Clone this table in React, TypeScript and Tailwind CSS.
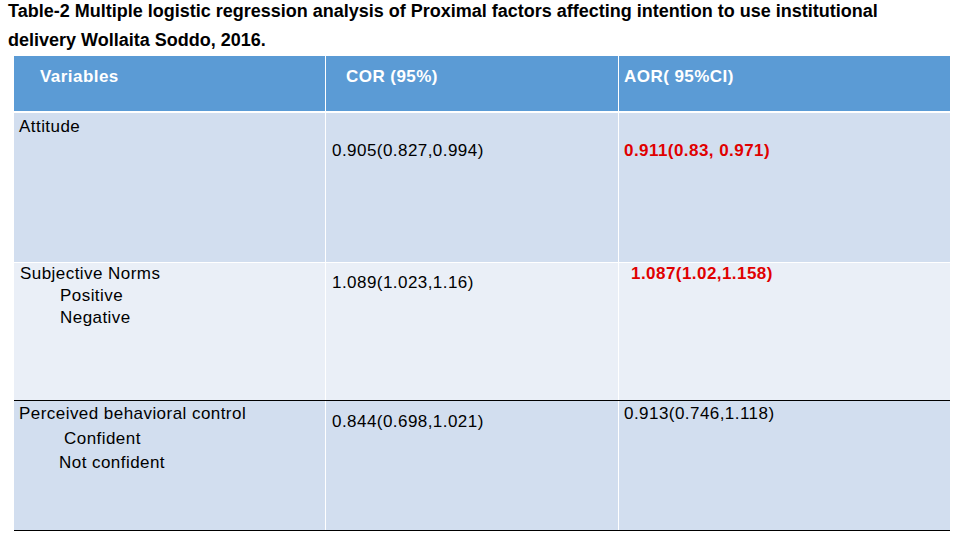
const font = { fontFamily: '"Liberation Sans", Arial, sans-serif' }

export default function App() {
  return (
    <div className="w-[960px] h-[540px] bg-white text-black overflow-hidden" style={font}>
      <div className="pl-[8px] font-bold text-[18px]">
        <div className="leading-[22px]">
          Table-2 Multiple logistic regression analysis of Proximal factors affecting intention to use institutional
        </div>
        <div className="leading-[22px] mt-[7px]">delivery Wollaita Soddo, 2016.</div>
      </div>

      <div className="ml-[14px] w-[936px] mt-[5px] text-[17px] tracking-[0.45px]">
        {/* header */}
        <div className="grid grid-cols-[311px_292px_331px] gap-x-px h-[55px] text-white font-bold leading-[20px]">
          <div className="bg-[#5b9bd5] pl-[26px] pt-[11px]">Variables</div>
          <div className="bg-[#5b9bd5] pl-[20px] pt-[11px]">COR (95%)</div>
          <div className="bg-[#5b9bd5] pl-[5px] pt-[11px]">AOR( 95%CI)</div>
        </div>

        {/* attitude */}
        <div className="grid grid-cols-[311px_292px_331px] gap-x-px h-[149px] mt-[2px] leading-[18px]">
          <div className="bg-[#d2deef] pl-[5px] pt-[5px]">Attitude</div>
          <div className="bg-[#d2deef] pl-[6px] pt-[29px]">0.905(0.827,0.994)</div>
          <div className="bg-[#d2deef] pl-[5px] pt-[29px] font-bold text-[#e00000]">0.911(0.83, 0.971)</div>
        </div>

        {/* subjective norms */}
        <div className="grid grid-cols-[311px_292px_331px] gap-x-px h-[137px] mt-px leading-[22px]">
          <div className="bg-[#eaeff7] pl-[6px]">
            <div>Subjective Norms</div>
            <div className="pl-[40px]">Positive</div>
            <div className="pl-[40px]">Negative</div>
          </div>
          <div className="bg-[#eaeff7] pl-[6px] pt-[9px]">1.089(1.023,1.16)</div>
          <div className="bg-[#eaeff7] pl-[12px] font-bold text-[#e00000]">1.087(1.02,1.158)</div>
        </div>
        <div className="h-px bg-black" />

        {/* perceived behavioral control */}
        <div className="grid grid-cols-[311px_292px_331px] gap-x-px h-[129px] leading-[24px]">
          <div className="bg-[#d2deef] pl-[5px] pt-[1px]">
            <div>Perceived behavioral control</div>
            <div className="pl-[45px] pt-px">Confident</div>
            <div className="pl-[40px]">Not confident</div>
          </div>
          <div className="bg-[#d2deef] pl-[6px] pt-[9px]">0.844(0.698,1.021)</div>
          <div className="bg-[#d2deef] pl-[5px] pt-[1px]">0.913(0.746,1.118)</div>
        </div>
        <div className="h-px bg-black" />
      </div>
    </div>
  )
}
